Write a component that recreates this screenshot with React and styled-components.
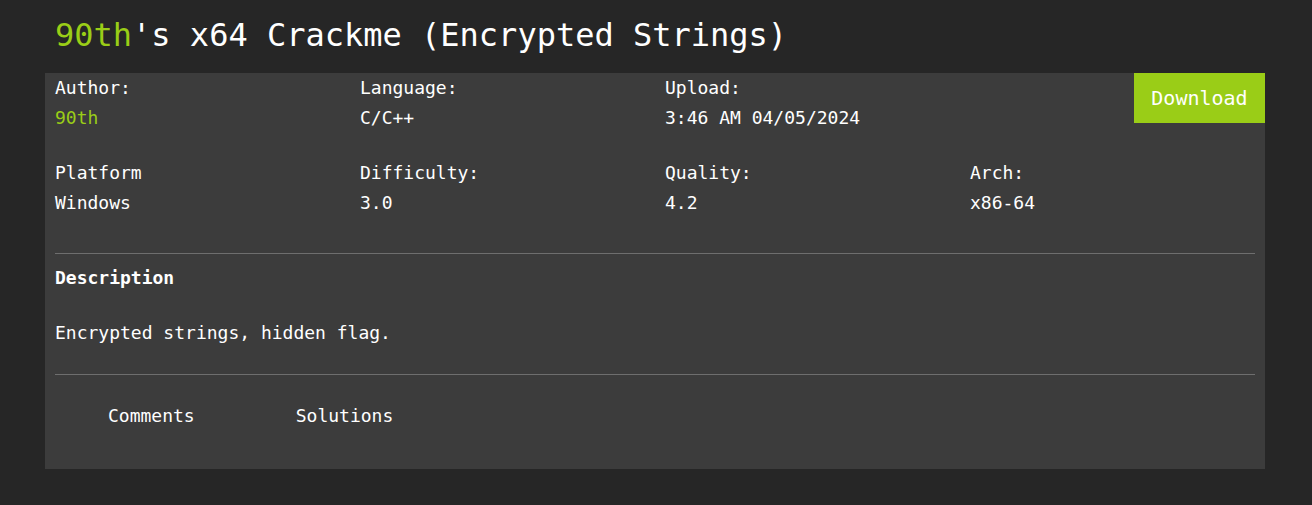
import styled, { createGlobalStyle } from "styled-components";

const GlobalStyle = createGlobalStyle`
    body {
        margin: 0;
        background: #262626;
        font-family: 'DejaVu Sans Mono', 'Liberation Mono', monospace;
        color: #ffffff;
    }
`

const fields = [
    [
        { label: "Author:", value: "90th", green: true },
        { label: "Language:", value: "C/C++" },
        { label: "Upload:", value: "3:46 AM 04/05/2024" },
    ],
    [
        { label: "Platform", value: "Windows" },
        { label: "Difficulty:", value: "3.0" },
        { label: "Quality:", value: "4.2" },
        { label: "Arch:", value: "x86-64" },
    ],
]

export default function App() {
    return (
        <>
            <GlobalStyle />
            <Page>
                <Title><Green>90th</Green>'s x64 Crackme (Encrypted Strings)</Title>
                <Card>
                    {fields.map((row, i) => (
                        <InfoRow key={i}>
                            {row.map(f => (
                                <Field key={f.label}>
                                    <Label>{f.label}</Label>
                                    <Value green={f.green}>{f.value}</Value>
                                </Field>
                            ))}
                            {i === 0 && (
                                <DownloadCell>
                                    <DownloadButton>Download</DownloadButton>
                                </DownloadCell>
                            )}
                        </InfoRow>
                    ))}
                    <Divider />
                    <SectionTitle>Description</SectionTitle>
                    <DescText>Encrypted strings, hidden flag.</DescText>
                    <Divider />
                    <Tabs>
                        <Tab>Comments</Tab>
                        <Tab>Solutions</Tab>
                    </Tabs>
                </Card>
            </Page>
        </>
    )
}

const Page = styled.main`
    padding: 0 47px 0 45px;
`

const Title = styled.h1`
    margin: 0;
    padding: 12px 10px 0 10px;
    height: 73px;
    box-sizing: border-box;
    font-size: 32px;
    font-weight: normal;
    line-height: 46px;
    color: #ffffff;
`

const Green = styled.span`
    color: #9acd17;
`

const Card = styled.section`
    background: #3c3c3c;
    padding-bottom: 38px;
    overflow: hidden;
`

const InfoRow = styled.div`
    display: grid;
    grid-template-columns: repeat(4, 1fr);
    & + & {
        margin-top: 25px;
    }
`

const Field = styled.div`
    padding: 0 10px;
    font-size: 18px;
    line-height: 30px;
`

const Label = styled.div`
    color: #ffffff;
`

const Value = styled.div`
    color: ${props => props.green ? "#9acd17" : "#ffffff"};
`

const DownloadCell = styled.div`
    display: flex;
    justify-content: flex-end;
    align-items: flex-start;
`

const DownloadButton = styled.button`
    background: #9acd17;
    border: none;
    color: #ffffff;
    font-family: 'DejaVu Sans Mono', 'Liberation Mono', monospace;
    font-size: 20px;
    width: 131px;
    height: 50px;
    padding: 0;
    cursor: pointer;
`

const Divider = styled.hr`
    margin: 35px 10px 0 10px;
    border: none;
    border-top: 1px solid #6e6e6e;
`

const SectionTitle = styled.h2`
    margin: 9px 0 0 0;
    padding: 0 10px;
    font-size: 18px;
    font-weight: bold;
    line-height: 30px;
`

const DescText = styled.p`
    margin: 25px 0 -9px 0;
    padding: 0 10px;
    font-size: 18px;
    line-height: 30px;
`

const Tabs = styled.nav`
    display: flex;
    gap: 101px;
    padding: 26px 0 0 63px;
`

const Tab = styled.span`
    font-size: 18px;
    line-height: 30px;
`
